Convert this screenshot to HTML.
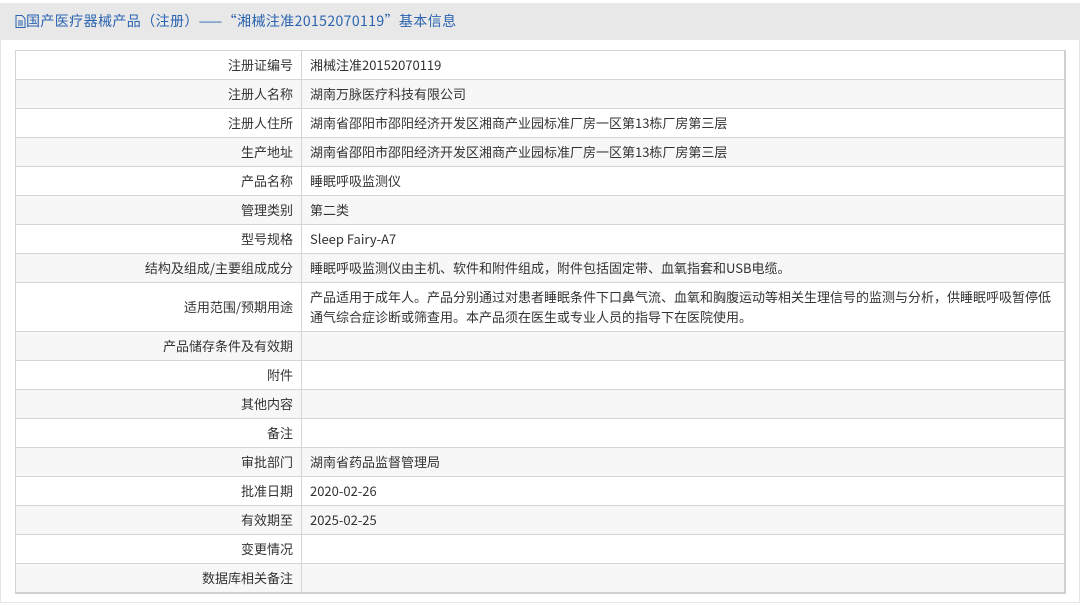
<!DOCTYPE html><html><head><meta charset="utf-8"><style>
body{margin:0;background:#fff;font-family:"Noto Sans CJK SC","Liberation Sans",sans-serif;font-size:13px;color:#333;width:1084px;height:606px;overflow:hidden}
.panel{position:absolute;left:0;top:3px;width:1078px;height:598px;border:1px solid #e6e6e6;background:#fff}
.hd{position:absolute;left:0;top:3px;width:1080px;height:37px;background:#e8e8e8;color:#2a63b0;font-size:14px;line-height:37px}
.hd span{position:absolute;left:15px;top:0;white-space:nowrap;letter-spacing:0.4px}
.hd svg{vertical-align:-2px}
table{position:absolute;left:15px;top:50px;width:1051px;border-collapse:collapse;border-right:2px solid #d0d0d0;border-bottom:2px solid #d0d0d0}
td{border:1px solid #d5d5d5;height:28px;padding:0 8px;line-height:20px}
td.l{width:269px;text-align:right}
tr:nth-child(even){background:#f7f7f7}
</style></head><body>
<div class="panel"></div>
<div class="hd"><span><svg width="11" height="13" viewBox="0 0 11 13"><path d="M1 .5h6l3 3v9H1z" fill="none" stroke="#2a63b0"/><path d="M3 6h5M3 8h5M3 10h5" stroke="#2a63b0"/></svg>国产医疗器械产品（注册）——“湘械注准20152070119”基本信息</span></div>
<table>
<tr><td class="l">注册证编号</td><td>湘械注准20152070119</td></tr>
<tr><td class="l">注册人名称</td><td>湖南万脉医疗科技有限公司</td></tr>
<tr><td class="l">注册人住所</td><td>湖南省邵阳市邵阳经济开发区湘商产业园标准厂房一区第13栋厂房第三层</td></tr>
<tr><td class="l">生产地址</td><td>湖南省邵阳市邵阳经济开发区湘商产业园标准厂房一区第13栋厂房第三层</td></tr>
<tr><td class="l">产品名称</td><td>睡眠呼吸监测仪</td></tr>
<tr><td class="l">管理类别</td><td>第二类</td></tr>
<tr><td class="l">型号规格</td><td>Sleep Fairy-A7</td></tr>
<tr><td class="l">结构及组成/主要组成成分</td><td>睡眠呼吸监测仪由主机、软件和附件组成，附件包括固定带、血氧指套和USB电缆。</td></tr>
<tr><td class="l" style="height:48px">适用范围/预期用途</td><td>产品适用于成年人。产品分别通过对患者睡眠条件下口鼻气流、血氧和胸腹运动等相关生理信号的监测与分析，供睡眠呼吸暂停低通气综合症诊断或筛查用。本产品须在医生或专业人员的指导下在医院使用。</td></tr>
<tr><td class="l">产品储存条件及有效期</td><td></td></tr>
<tr><td class="l">附件</td><td></td></tr>
<tr><td class="l">其他内容</td><td></td></tr>
<tr><td class="l">备注</td><td></td></tr>
<tr><td class="l">审批部门</td><td>湖南省药品监督管理局</td></tr>
<tr><td class="l">批准日期</td><td>2020-02-26</td></tr>
<tr><td class="l">有效期至</td><td>2025-02-25</td></tr>
<tr><td class="l">变更情况</td><td></td></tr>
<tr><td class="l">数据库相关备注</td><td></td></tr>
</table>
</body></html>
